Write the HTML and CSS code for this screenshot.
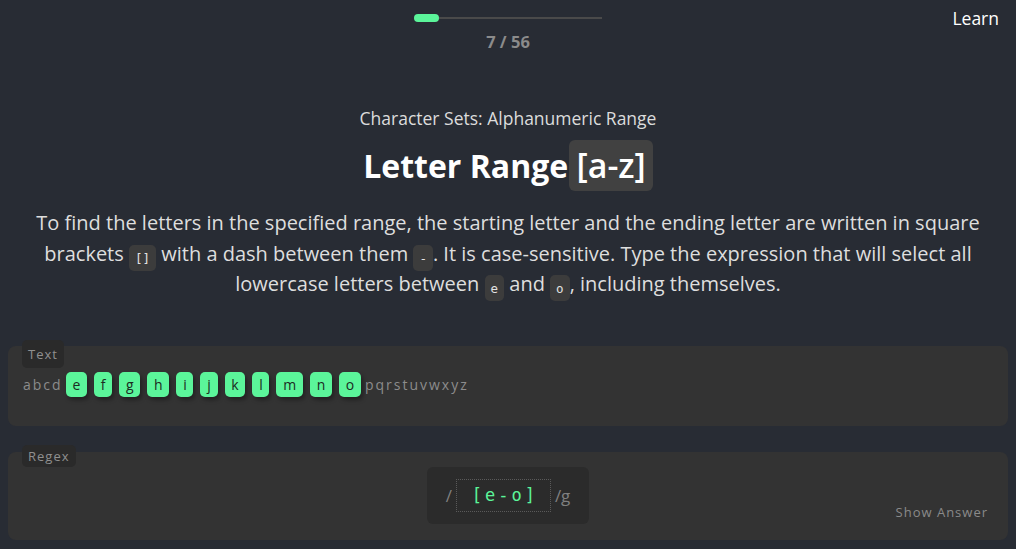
FILE: index.html
```html
<!DOCTYPE html>
<html lang="en">
<head>
<meta charset="utf-8">
<title>Letter Range</title>
<link rel="stylesheet" href="styles.css">
</head>
<body>
<header class="topbar">
  <div class="side"></div>
  <div class="progress">
    <div class="track"><div class="fill" style="width: 25px"></div></div>
    <div class="count">7 / 56</div>
  </div>
  <div class="side right"><span class="learn">Learn</span></div>
</header>

<main class="lesson">
  <div class="subtitle">Character Sets: Alphanumeric Range</div>
  <h1 class="title">Letter Range <span class="title-code">[a-z]</span></h1>
  <p class="desc">To find the letters in the specified range, the starting letter and the ending letter are written in square brackets <code class="ic">[]</code> with a dash between them <code class="ic">-</code>. It is case-sensitive. Type the expression that will select all lowercase letters between <code class="ic">e</code> and <code class="ic">o</code>, including themselves.</p>
</main>

<section class="box text-box">
  <span class="label">Text</span>
  <div class="letters">abcd<mark class="hl">e</mark><mark class="hl">f</mark><mark class="hl">g</mark><mark class="hl">h</mark><mark class="hl">i</mark><mark class="hl">j</mark><mark class="hl">k</mark><mark class="hl">l</mark><mark class="hl">m</mark><mark class="hl">n</mark><mark class="hl">o</mark>pqrstuvwxyz</div>
</section>

<section class="box regex-box">
  <span class="label">Regex</span>
  <div></div>
  <div class="input">
    <span class="slash">/</span>
    <span class="field">[e-o]</span>
    <span class="slash">/g</span>
  </div>
  <div class="answer"><span>Show Answer</span></div>
</section>
</body>
</html>
```

FILE: styles.css
```css
* { box-sizing: border-box; }
html, body { margin: 0; }
body {
  background: #282c34;
  color: #e2e2e2;
  font-family: "Open Sans", "Noto Sans", sans-serif;
  padding: 0 8px;
  height: 549px;
  overflow: hidden;
}

.topbar {
  display: grid;
  grid-template-columns: 1fr 188px 1fr;
  align-items: start;
  height: 60px;
}
.side.right {
  display: flex;
  justify-content: flex-end;
  padding-right: 9px;
  padding-top: 6px;
}
.learn {
  color: #ffffff;
  font-size: 17.5px;
  line-height: 24px;
}
.progress {
  padding-top: 14px;
  display: flex;
  flex-direction: column;
  align-items: center;
}
.track {
  width: 188px;
  height: 8px;
  position: relative;
  display: flex;
  align-items: center;
}
.track::before {
  content: "";
  position: absolute;
  left: 0; right: 0;
  top: 3px;
  height: 2px;
  background: #4a4a4a;
}
.fill {
  position: relative;
  height: 8px;
  border-radius: 4px;
  background: #5bf59a;
}
.count {
  margin-top: 8px;
  color: #8b8b8b;
  font-weight: 700;
  font-size: 16.5px;
  line-height: 24px;
}

.lesson {
  text-align: center;
  padding: 0 20px;
}
.subtitle {
  margin-top: 46px;
  font-size: 17.5px;
  line-height: 24px;
  color: #dcdcdc;
}
.title {
  margin: 10px 0 0;
  font-size: 32px;
  line-height: 52px;
  font-weight: 700;
  color: #ffffff;
}
.title-code {
  display: inline-block;
  background: #414141;
  border-radius: 6px;
  padding: 0 7px;
  font-size: 34px;
  font-weight: 600;
  line-height: 51px;
  margin-left: -7px;
  vertical-align: top;
}
.desc {
  margin: 16px -20px 0;
  font-size: 20px;
  line-height: 30.5px;
  color: #dedede;
}
.ic {
  font-family: "DejaVu Sans Mono", "Liberation Mono", monospace;
  font-size: 12.5px;
  line-height: 1;
  padding: 6px 6px 5px;
  background: #3c3c3c;
  border-radius: 5px;
  color: #e2e2e2;
  position: relative;
  top: 2px;
}

.box {
  position: relative;
  background: #333333;
  border-radius: 8px;
}
.label {
  position: absolute;
  top: -7px;
  left: 14px;
  background: #2a2a2a;
  color: #909090;
  font-size: 13px;
  letter-spacing: 1px;
  line-height: 22px;
  padding: 0 6px;
  border-radius: 5px;
}
.text-box {
  margin-top: 46px;
  height: 80px;
  padding: 26px 15px 0;
}
.text-box .label { top: -6px; line-height: 28px; }
.letters {
  display: flex;
  align-items: center;
  font-size: 14px;
  letter-spacing: 2px;
  color: #8c8c8c;
  height: 25px;
}
.hl {
  display: inline-flex;
  align-items: center;
  height: 25px;
  padding: 0 4.75px 0 6.75px;
  margin: 0 4px 0 3px;
  background: #5bf59a;
  color: #1c2a22;
  border-radius: 5px;
  box-shadow: 2px 3px 4px rgba(0, 0, 0, 0.35);
}

.regex-box {
  margin-top: 26px;
  height: 88px;
  padding: 15px 20px 0;
  display: grid;
  grid-template-columns: 1fr 162px 1fr;
}
.input {
  height: 57px;
  background: #2b2b2b;
  border-radius: 6px;
  display: flex;
  align-items: center;
  justify-content: center;
  gap: 4px;
  font-family: "DejaVu Sans Mono", "Liberation Mono", monospace;
  color: #808080;
  font-size: 16px;
}
.slash { font-family: "Open Sans", sans-serif; font-size: 17px; }
.field {
  width: 95px;
  height: 33px;
  border: 1px dotted #5a5a5a;
  display: flex;
  align-items: center;
  justify-content: center;
  color: #5bf59a;
  font-size: 17px;
  letter-spacing: 3px;
  padding-left: 3px;
}
.answer {
  display: flex;
  justify-content: flex-end;
  align-items: flex-end;
  padding-bottom: 18px;
}
.answer span {
  color: #8a8a8a;
  font-size: 13px;
  letter-spacing: 1px;
  line-height: 20px;
}
```
